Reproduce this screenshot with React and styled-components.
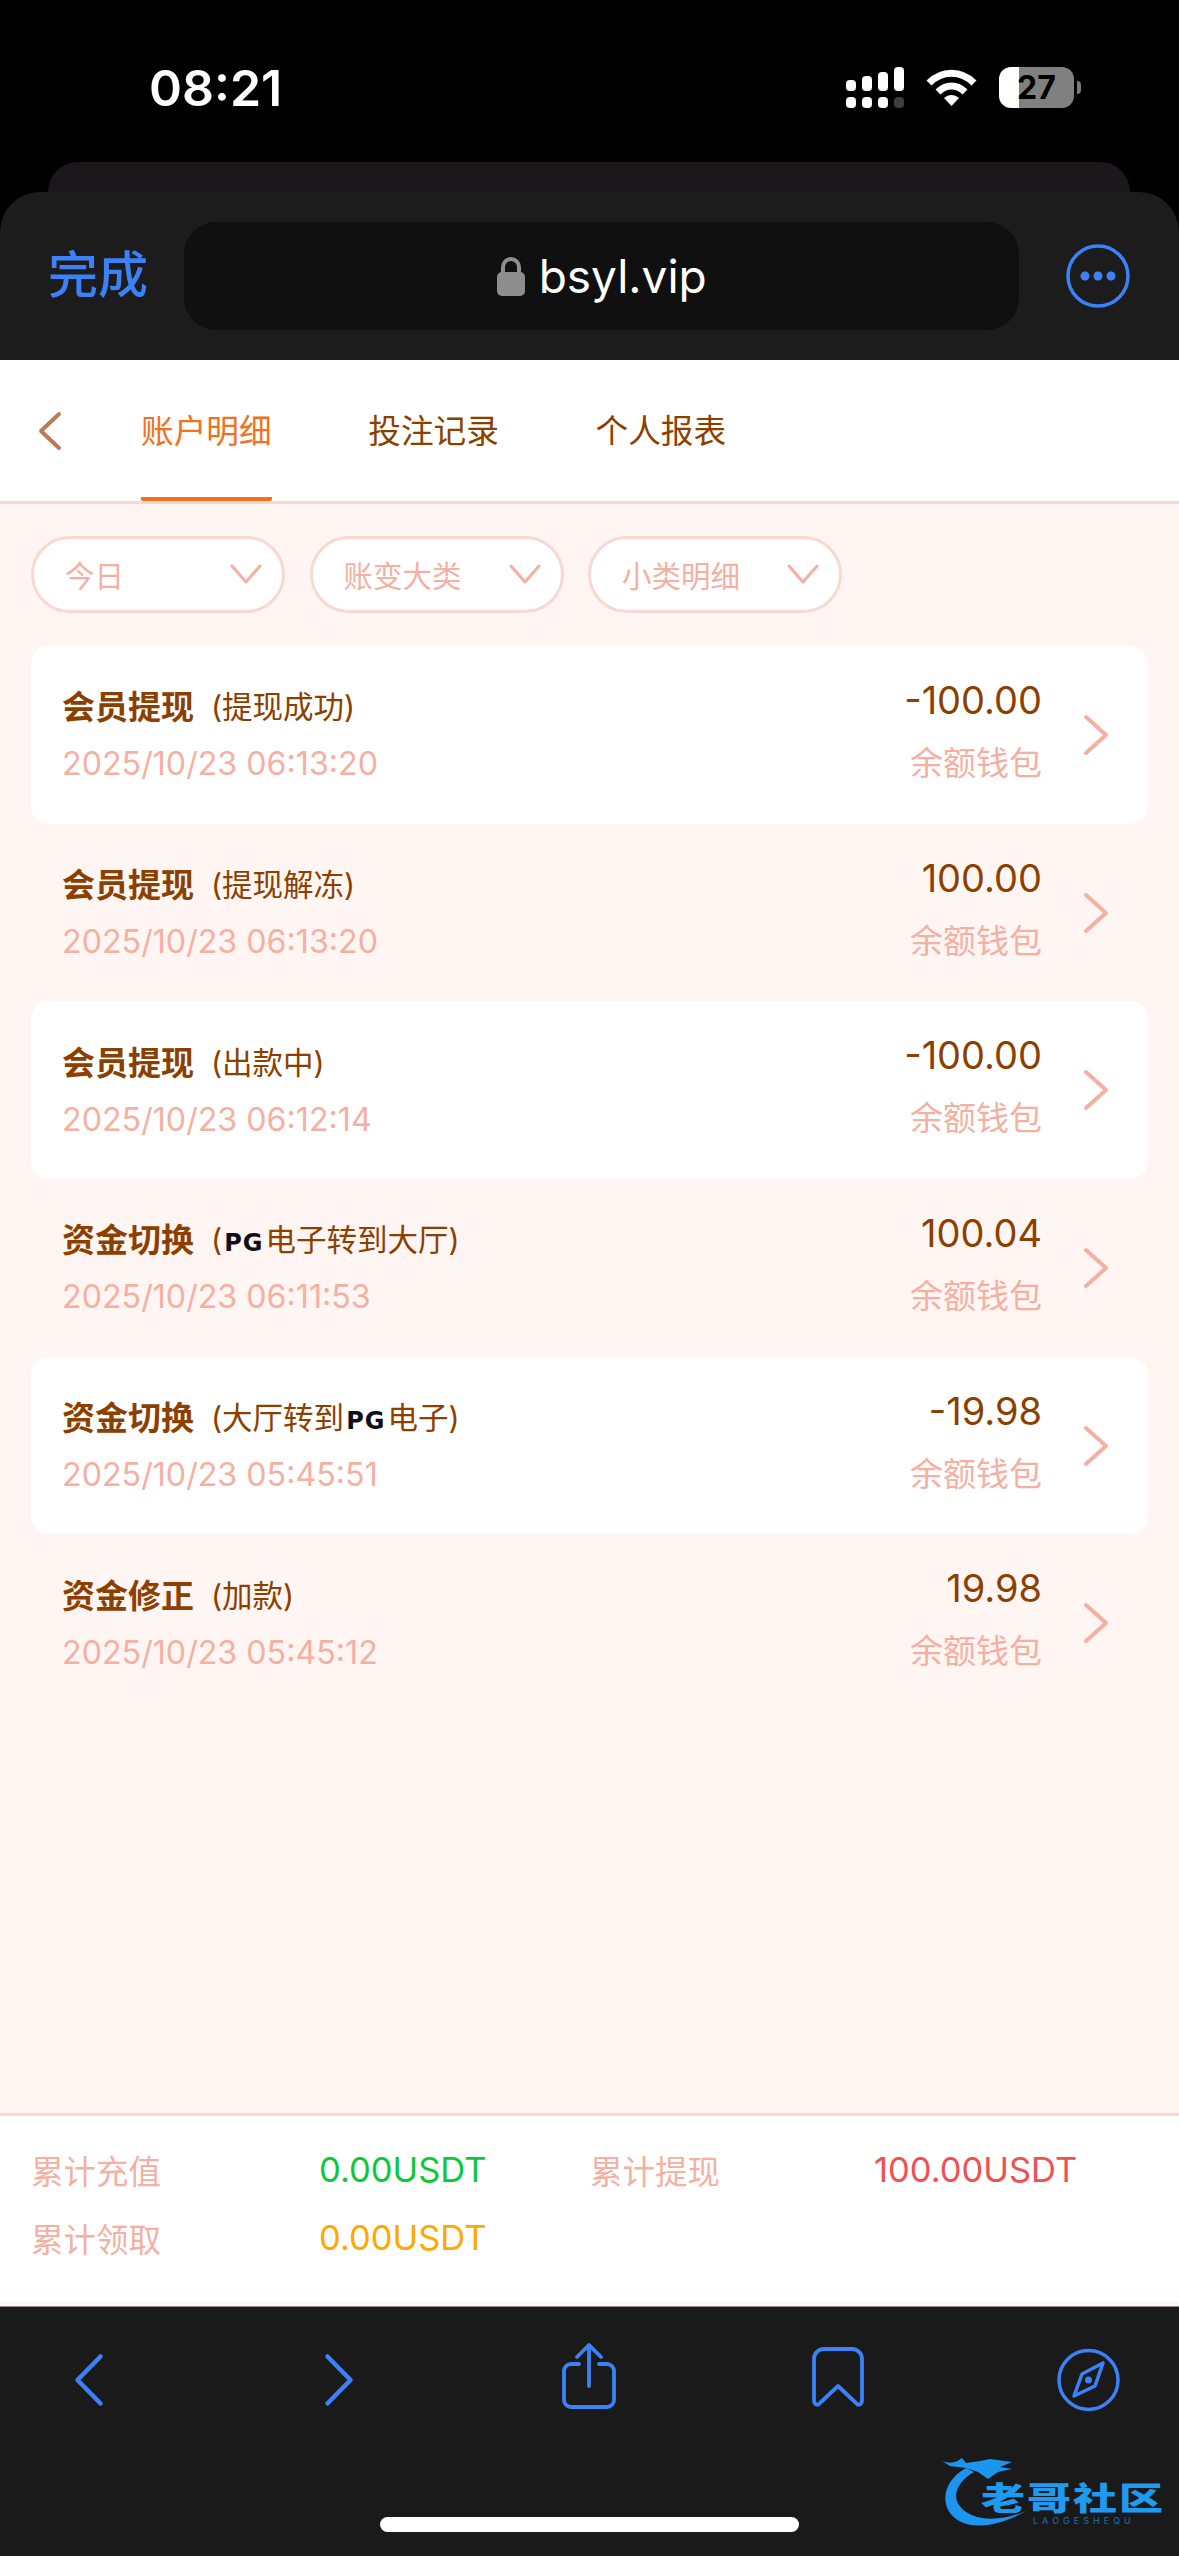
import React from 'react';
import styled, { createGlobalStyle } from 'styled-components';

const BLUE = '#3b82f6';
const BROWN = '#8b4000';
const SALMON = '#f4b0a2';
const LINE = '#f7d9d2';

const GlobalStyle = createGlobalStyle`
    html, body {
        margin: 0;
        padding: 0;
        background: #000;
    }
    * {
        box-sizing: border-box;
    }
`;

const Style = {
    Page: styled.div`
        width: 1179px;
        height: 2556px;
        position: relative;
        overflow: hidden;
        display: flex;
        flex-direction: column;
        background: #000;
        font-family: Inter, "Noto Sans CJK SC", sans-serif;
    `,
    StatusBar: styled.div`
        height: 162px;
        flex-shrink: 0;
        display: flex;
        align-items: flex-start;
        justify-content: space-between;
        padding: 57px 105px 0 149px;
    `,
    Time: styled.div`
        color: #fff;
        font-size: 50px;
        font-weight: 600;
        line-height: 62px;
    `,
    StatusIcons: styled.div`
        display: flex;
        align-items: center;
        gap: 22px;
        margin-top: 10px;
    `,
    Battery: styled.div`
        width: 75px;
        height: 41px;
        border-radius: 12px;
        background: linear-gradient(to right, #fff 0 20px, #808080 20px 100%);
        color: #000;
        font-size: 32px;
        font-weight: 700;
        line-height: 41px;
        text-align: center;
        position: relative;
        &::after {
            content: '';
            position: absolute;
            right: -7px;
            top: 14px;
            width: 4px;
            height: 13px;
            background: #7c7c7c;
            border-radius: 0 6px 6px 0;
        }
    `,
    PeekCard: styled.div`
        height: 30px;
        flex-shrink: 0;
        margin: 0 49px 0 48px;
        border-radius: 30px 30px 0 0;
        background: #1b171b;
    `,
    BrowserBar: styled.div`
        height: 168px;
        flex-shrink: 0;
        display: flex;
        align-items: flex-start;
        padding: 30px 49px 0 48px;
        background: #1c1c1c;
        border-radius: 40px 40px 0 0;
    `,
    Done: styled.div`
        width: 137px;
        color: ${BLUE};
        font-size: 50px;
        font-weight: 500;
        line-height: 106px;
    `,
    Address: styled.div`
        width: 838px;
        height: 108px;
        display: flex;
        align-items: center;
        justify-content: center;
        gap: 14px;
        background: #101010;
        border-radius: 32px;
        color: #fff;
        font-size: 46px;
    `,
    More: styled.div`
        margin: 22px 0 0 47px;
        height: 64px;
        line-height: 0;
    `,
    TabBar: styled.div`
        height: 144px;
        flex-shrink: 0;
        display: flex;
        align-items: flex-start;
        padding-left: 37px;
        background: #fff;
        border-bottom: 3px solid ${LINE};
    `,
    BackArrow: styled.div`
        width: 104px;
        height: 141px;
        display: flex;
        align-items: center;
    `,
    Tabs: styled.div`
        display: flex;
        gap: 96.5px;
    `,
    Tab: styled.div`
        height: 141px;
        line-height: 143px;
        font-size: 32.7px;
        color: ${(p) => (p.$active ? '#f37021' : BROWN)};
        border-bottom: 4px solid ${(p) => (p.$active ? '#f37021' : 'transparent')};
        border-radius: 0 0 2px 2px;
    `,
    Main: styled.div`
        flex: 1;
        min-height: 0;
        padding: 32px 31px 0;
        background: #fff5f2;
    `,
    Filters: styled.div`
        display: flex;
        gap: 24.5px;
        margin-bottom: 33px;
    `,
    Pill: styled.div`
        width: 254px;
        height: 77px;
        display: flex;
        align-items: center;
        justify-content: space-between;
        padding: 0 19px 2px 31px;
        background: #fff;
        border: 3px solid ${LINE};
        border-radius: 39px;
        color: ${SALMON};
        font-size: 29.5px;
    `,
    Row: styled.div`
        height: 177.7px;
        display: flex;
        align-items: center;
        padding: 0 38px 0 31px;
        border-radius: 18px;
        background: ${(p) => (p.$white ? '#fff' : 'transparent')};
    `,
    RowLeft: styled.div`
        flex: 1;
        min-width: 0;
    `,
    Title: styled.div`
        display: flex;
        align-items: center;
        height: 40px;
        color: ${BROWN};
        white-space: nowrap;
    `,
    TitleMain: styled.span`
        font-size: 33px;
        font-weight: 700;
        margin-right: 17px;
    `,
    TitleSub: styled.span`
        font-size: 30.5px;
    `,
    PgMark: styled.span`
        color: #101018;
        font-family: "DejaVu Sans", sans-serif;
        font-size: 24px;
        font-weight: 700;
        letter-spacing: 1px;
        margin: 0 2px;
    `,
    Date: styled.div`
        margin-top: 19px;
        color: ${SALMON};
        font-size: 32.2px;
        line-height: 40px;
        white-space: nowrap;
    `,
    RowRight: styled.div`
        text-align: right;
        margin-right: 40px;
    `,
    Amount: styled.div`
        color: ${BROWN};
        font-size: 38px;
        line-height: 46px;
        margin-top: -7px;
    `,
    Wallet: styled.div`
        color: ${SALMON};
        font-size: 33px;
        line-height: 46px;
        margin-top: 17px;
    `,
    Footer: styled.div`
        height: 193px;
        flex-shrink: 0;
        border-top: 3px solid ${LINE};
        border-bottom: 4px solid #fff5f2;
        background: #fff;
        padding: 19px 0 0 31px;
        display: grid;
        grid-template-columns: 288px 271px 284px 1fr;
        grid-auto-rows: 68px;
        align-items: center;
    `,
    StatLabel: styled.div`
        color: ${SALMON};
        font-size: 32.5px;
    `,
    StatValue: styled.div`
        color: ${(p) => p.$color};
        font-size: 34.5px;
    `,
    Toolbar: styled.div`
        height: 250px;
        flex-shrink: 0;
        background: #1a1a1a;
        border-top: 1px solid #8d8a89;
        display: flex;
        flex-direction: column;
    `,
    ToolIcons: styled.div`
        height: 145px;
        flex-shrink: 0;
        display: flex;
        align-items: center;
        justify-content: space-between;
        padding: 0 58px 0 56px;
    `,
    ToolCell: styled.div`
        width: 66px;
        display: flex;
        justify-content: center;
        margin-bottom: ${(p) => p.$lift || 0}px;
    `,
    HomeBar: styled.div`
        width: 419px;
        height: 15px;
        margin: 65px auto 0;
        border-radius: 8px;
        background: #fff;
    `,
    Watermark: styled.div`
        position: absolute;
        left: 940px;
        top: 2455px;
        width: 225px;
        height: 80px;
    `,
    WatermarkName: styled.div`
        position: absolute;
        left: 41px;
        top: 28px;
        color: #1e9bf0;
        font-size: 44px;
        font-weight: 900;
        line-height: 42px;
        letter-spacing: 2px;
        white-space: nowrap;
        transform: scaleY(0.72);
        transform-origin: top left;
    `,
    WatermarkSub: styled.div`
        position: absolute;
        left: 93px;
        top: 60px;
        color: #14679f;
        font-size: 9px;
        line-height: 11px;
        font-weight: 500;
        letter-spacing: 4px;
    `,
};

const Signal = () => (
    <svg width="58" height="41" viewBox="0 0 58 41" fill="#fff">
        <rect x="0" y="13" width="10" height="11" rx="4" />
        <rect x="16" y="9" width="10" height="15" rx="4" />
        <rect x="32" y="5" width="10" height="19" rx="4" />
        <rect x="48" y="0" width="10" height="24" rx="4" />
        <rect x="0" y="30" width="10" height="11" rx="4" />
        <rect x="16" y="30" width="10" height="11" rx="4" />
        <rect x="32" y="30" width="10" height="11" rx="4" />
        <rect x="48" y="30" width="10" height="11" rx="4" fill="#3d3d3d" />
    </svg>
);

const Wifi = () => (
    <svg width="51" height="38" viewBox="0 0 51 38" fill="none" stroke="#fff" strokeWidth="7">
        <path d="M3 14 C16 1 35 1 48 14" />
        <path d="M12 23 C20 15 31 15 39 23" />
        <path d="M18 29 L25.5 37 L33 29 C28 25 23 25 18 29 Z" fill="#fff" stroke="none" />
    </svg>
);

const Lock = () => (
    <svg width="28" height="40" viewBox="0 0 28 40">
        <path d="M6 17 V11 a8 8 0 0 1 16 0 V17" fill="none" stroke="#8e8e8e" strokeWidth="4" />
        <rect x="0" y="16" width="28" height="24" rx="5" fill="#8e8e8e" />
    </svg>
);

const MoreIcon = () => (
    <svg width="64" height="64" viewBox="0 0 64 64" fill={BLUE}>
        <circle cx="32" cy="32" r="30" fill="none" stroke={BLUE} strokeWidth="3.5" />
        <circle cx="19" cy="32" r="4.5" />
        <circle cx="32" cy="32" r="4.5" />
        <circle cx="45" cy="32" r="4.5" />
    </svg>
);

// 공통 꺾쇠 아이콘
const Chevron = ({ w, h, color, sw, dir }) => {
    const points = {
        left: `${w - sw},${sw} ${sw},${h / 2} ${w - sw},${h - sw}`,
        right: `${sw},${sw} ${w - sw},${h / 2} ${sw},${h - sw}`,
        down: `${sw},${sw} ${w / 2},${h - sw} ${w - sw},${sw}`,
    };
    return (
        <svg width={w} height={h} viewBox={`0 0 ${w} ${h}`} fill="none">
            <polyline
                points={points[dir]}
                stroke={color}
                strokeWidth={sw}
                strokeLinecap="round"
                strokeLinejoin="round"
            />
        </svg>
    );
};

const ShareIcon = () => (
    <svg width="54" height="66" viewBox="0 0 54 66" fill="none" stroke={BLUE} strokeWidth="3.8" strokeLinecap="round" strokeLinejoin="round">
        <path d="M17 21 H9 a7 7 0 0 0 -7 7 V57 a7 7 0 0 0 7 7 H45 a7 7 0 0 0 7 -7 V28 a7 7 0 0 0 -7 -7 H37" />
        <path d="M27 43 V3" />
        <path d="M15 14 L27 2 L39 14" />
    </svg>
);

const BookmarkIcon = () => (
    <svg width="52" height="60" viewBox="0 0 52 60" fill="none" stroke={BLUE} strokeWidth="3.8" strokeLinejoin="round">
        <path d="M2 12 a10 10 0 0 1 10 -10 H40 a10 10 0 0 1 10 10 V53 c0 5 -4 6 -6 3 L26 39 L8 56 c-2 3 -6 2 -6 -3 Z" />
    </svg>
);

const CompassIcon = () => (
    <svg width="63" height="64" viewBox="0 0 63 64" fill="none" stroke={BLUE} strokeWidth="3.5" strokeLinejoin="round">
        <circle cx="31.5" cy="32" r="29.5" />
        <path d="M46 15 L38 38 L17 48 L25 26 Z" />
        <circle cx="31.5" cy="32" r="3.5" fill={BLUE} stroke="none" />
    </svg>
);

const Dragon = () => (
    <svg width="120" height="80" viewBox="0 0 120 80" style={{ position: 'absolute', left: 0, top: 0 }}>
        <path d="M26 13 C6 24 0 44 10 58 C22 74 50 76 86 56 C58 68 30 66 19 50 C12 40 18 26 34 17 Z" fill="#1b95ee" />
        <path d="M2 6 C12 10 18 6 22 3 L26 8 L40 6 L50 4 L72 7 L60 12 L72 14 L58 17 L48 24 L38 17 L26 13 L10 11 Z" fill="#1b95ee" />
    </svg>
);

const rows = [
    { title: '会员提现', sub: '(提现成功)', date: '2025/10/23 06:13:20', amount: '-100.00' },
    { title: '会员提现', sub: '(提现解冻)', date: '2025/10/23 06:13:20', amount: '100.00' },
    { title: '会员提现', sub: '(出款中)', date: '2025/10/23 06:12:14', amount: '-100.00' },
    { title: '资金切换', sub: <>(<Style.PgMark>PG</Style.PgMark>电子转到大厅)</>, date: '2025/10/23 06:11:53', amount: '100.04' },
    { title: '资金切换', sub: <>(大厅转到<Style.PgMark>PG</Style.PgMark>电子)</>, date: '2025/10/23 05:45:51', amount: '-19.98' },
    { title: '资金修正', sub: '(加款)', date: '2025/10/23 05:45:12', amount: '19.98' },
];

const App = () => {
    return (
        <>
            <GlobalStyle />
            <Style.Page>
                <Style.StatusBar>
                    <Style.Time>08:21</Style.Time>
                    <Style.StatusIcons>
                        <Signal />
                        <Wifi />
                        <Style.Battery>27</Style.Battery>
                    </Style.StatusIcons>
                </Style.StatusBar>
                <Style.PeekCard />
                <Style.BrowserBar>
                    <Style.Done>完成</Style.Done>
                    <Style.Address>
                        <Lock />
                        bsyl.vip
                    </Style.Address>
                    <Style.More>
                        <MoreIcon />
                    </Style.More>
                </Style.BrowserBar>
                <Style.TabBar>
                    <Style.BackArrow>
                        <Chevron w={26} h={42} color="#bb7a58" sw={4} dir="left" />
                    </Style.BackArrow>
                    <Style.Tabs>
                        <Style.Tab $active>账户明细</Style.Tab>
                        <Style.Tab>投注记录</Style.Tab>
                        <Style.Tab>个人报表</Style.Tab>
                    </Style.Tabs>
                </Style.TabBar>
                <Style.Main>
                    <Style.Filters>
                        {['今日', '账变大类', '小类明细'].map((name) => (
                            <Style.Pill key={name}>
                                {name}
                                <Chevron w={34} h={22} color={SALMON} sw={3} dir="down" />
                            </Style.Pill>
                        ))}
                    </Style.Filters>
                    {rows.map((row, i) => (
                        <Style.Row key={i} $white={i % 2 === 0}>
                            <Style.RowLeft>
                                <Style.Title>
                                    <Style.TitleMain>{row.title}</Style.TitleMain>
                                    <Style.TitleSub>{row.sub}</Style.TitleSub>
                                </Style.Title>
                                <Style.Date>{row.date}</Style.Date>
                            </Style.RowLeft>
                            <Style.RowRight>
                                <Style.Amount>{row.amount}</Style.Amount>
                                <Style.Wallet>余额钱包</Style.Wallet>
                            </Style.RowRight>
                            <Chevron w={28} h={44} color={SALMON} sw={4} dir="right" />
                        </Style.Row>
                    ))}
                </Style.Main>
                <Style.Footer>
                    <Style.StatLabel>累计充值</Style.StatLabel>
                    <Style.StatValue $color="#0cc83a">0.00USDT</Style.StatValue>
                    <Style.StatLabel>累计提现</Style.StatLabel>
                    <Style.StatValue $color="#f0504f">100.00USDT</Style.StatValue>
                    <Style.StatLabel>累计领取</Style.StatLabel>
                    <Style.StatValue $color="#ffa800">0.00USDT</Style.StatValue>
                </Style.Footer>
                <Style.Toolbar>
                    <Style.ToolIcons>
                        <Style.ToolCell>
                            <Chevron w={32} h={56} color={BLUE} sw={4.5} dir="left" />
                        </Style.ToolCell>
                        <Style.ToolCell>
                            <Chevron w={32} h={56} color={BLUE} sw={4.5} dir="right" />
                        </Style.ToolCell>
                        <Style.ToolCell $lift={7}>
                            <ShareIcon />
                        </Style.ToolCell>
                        <Style.ToolCell $lift={5}>
                            <BookmarkIcon />
                        </Style.ToolCell>
                        <Style.ToolCell>
                            <CompassIcon />
                        </Style.ToolCell>
                    </Style.ToolIcons>
                    <Style.HomeBar />
                </Style.Toolbar>
                <Style.Watermark>
                    <Dragon />
                    <Style.WatermarkName>老哥社区</Style.WatermarkName>
                    <Style.WatermarkSub>LAOGESHEQU</Style.WatermarkSub>
                </Style.Watermark>
            </Style.Page>
        </>
    );
};

export default App;
